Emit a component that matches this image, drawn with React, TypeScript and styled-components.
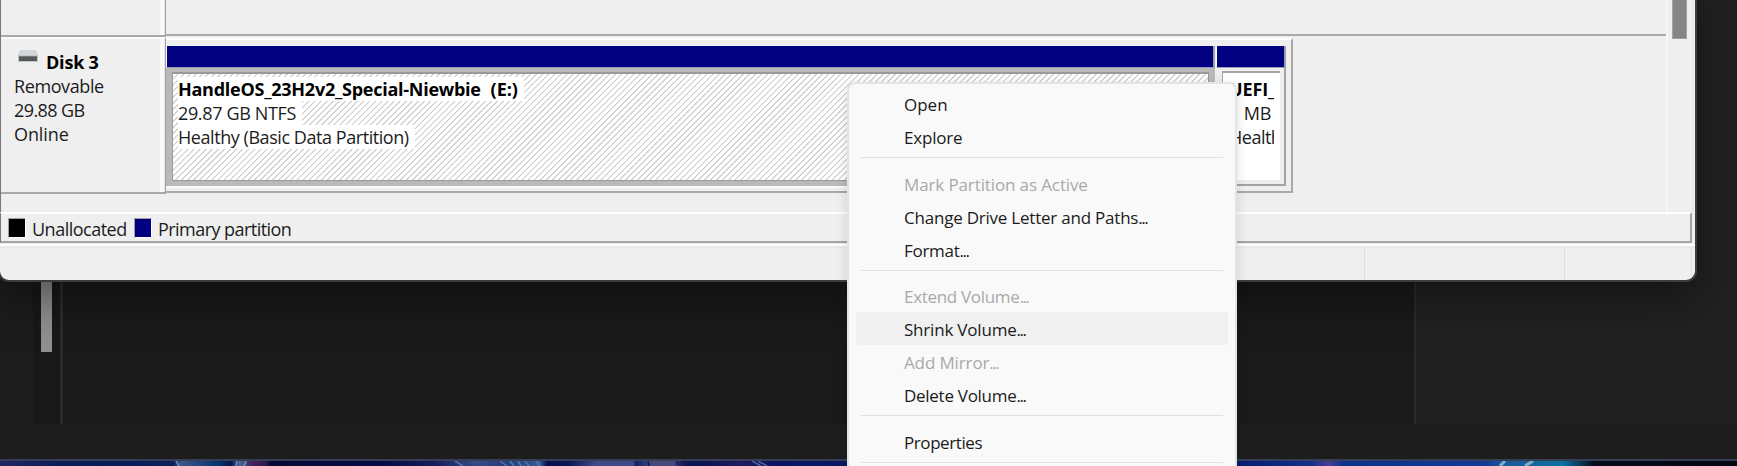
import React from 'react';
import styled, { createGlobalStyle, css } from 'styled-components';

const GlobalStyle = createGlobalStyle`
  * { box-sizing: border-box; }
  html, body { margin: 0; background: #1d1d1d; }
  body { font-family: "Open Sans", "Noto Sans", sans-serif; overflow: hidden; }
`;

const Desktop = styled.div`
  position: relative;
  width: 1737px;
  height: 466px;
  overflow: hidden;
  display: flex;
  flex-direction: column;
  background: #1d1d1d;
`;

/* Dark application behind the disk manager */
const Panes = styled.div`
  display: flex;
  height: 424px;
`;

const SidePane = styled.div`
  width: 33px;
  background: #1c1c1c;
`;

const ScrollPane = styled.div`
  width: 27px;
  padding-left: 8px;
  background: #181818;
`;

const DarkThumb = styled.div`
  width: 11px;
  height: 352px;
  background: #909090;
`;

const PaneDivider = styled.div<{ $width: number }>`
  width: ${(p) => p.$width}px;
  background: #2b2b2b;
`;

const MainPane = styled.div`
  width: 1351px;
  background: #1a1a1a;
`;

const RightPane = styled.div`
  flex: 1;
  background: #212121;
`;

const Footer = styled.div`
  height: 37px;
  background: #1d1d1d;
  border-bottom: 2px solid #353e56;
`;

const Wallpaper = styled.svg`
  display: block;
  width: 1737px;
  height: 5px;
`;

/* Disk manager window */
const Window = styled.section`
  position: absolute;
  left: -2px;
  top: -20px;
  width: 1699px;
  height: 302px;
  display: flex;
  flex-direction: column;
  padding-top: 20px;
  border: 2px solid #3d3d3d;
  border-top: 0;
  border-radius: 0 0 11px 11px;
  overflow: hidden;
  background: #efefef;
  box-shadow: 0 16px 48px rgba(0, 0, 0, 0.42);
`;

const Body = styled.div`
  display: flex;
  height: 212px;
  border-left: 1px solid #777;
`;

const DiskList = styled.div`
  display: flex;
  flex-direction: column;
  width: 1665px;
`;

const ScrollTrack = styled.div`
  width: 27px;
  padding-left: 4px;
  border-left: 2px solid #f6f6f6;
  border-right: 1px solid #e3e3e3;
`;

const LightThumb = styled.div`
  width: 15px;
  height: 39px;
  background: #858585;
  border: 1px solid #a2a2a2;
  border-top: 0;
`;

const DiskRow = styled.div<{ $height: number }>`
  display: flex;
  height: ${(p) => p.$height}px;
`;

const labelFrame = css`
  width: 165px;
  border-right: 1px solid #a0a0a0;
  border-bottom: 2px solid #a8a8a8;
  background: linear-gradient(90deg, #efefef 159px, #f9f9f9 159px, #f9f9f9 163px, #e6e6e6 163px);
`;

const LabelCell = styled.div`
  ${labelFrame}
  border-top: 2px solid #fafafa;
  padding: 11px 0 0 13px;
`;

const EmptyLabel = styled.div`
  ${labelFrame}
`;

const EmptyGraph = styled.div`
  flex: 1;
  height: 36px;
  border-bottom: 2px solid #a9a9a9;
`;

const TextLine = styled.div<{ $bold?: boolean; $track?: number }>`
  height: 24px;
  line-height: 24px;
  font-size: 18px;
  font-weight: ${(p) => (p.$bold ? 700 : 400)};
  letter-spacing: ${(p) => p.$track ?? 0}px;
  color: ${(p) => (p.$bold ? '#000' : '#1c1c1c')};
  white-space: pre;
`;

const LabelTitle = styled.div`
  display: flex;
  gap: 7px;
  padding-left: 3px;
`;

const DiskIcon = styled.svg`
  width: 22px;
  height: 14px;
  flex: none;
`;

const Graph = styled.div`
  width: 1127px;
  height: 155px;
  margin-top: 1px;
  padding: 6px 5px 5px 0;
  display: flex;
  gap: 1px;
  border-top: 2px solid #fff;
  border-right: 2px solid #a8a8a8;
  border-bottom: 2px solid #a8a8a8;
`;

const Partition = styled.div<{ $width: number }>`
  flex: none;
  width: ${(p) => p.$width}px;
  height: 140px;
  display: flex;
  flex-direction: column;
`;

const PartitionBar = styled.div`
  height: 22px;
  background: #000080;
  border-left: 1px solid #fff;
  border-right: 2px solid #9c9ca4;
  border-bottom: 1px solid #9c9cb8;
`;

const SelectedBody = styled.div`
  height: 118px;
  padding: 4px 6px 5px 6px;
  background: #b9b9b9;
  box-shadow: 0 2px 0 #fafafa;
`;

const Hatched = styled.div`
  height: 109px;
  padding: 3px 0 0 5px;
  border: 1px solid #9a9a9a;
  border-top-width: 2px;
  background: repeating-linear-gradient(135deg, #fff 0, #fff 2.7px, #c9c9c9 3.3px, #c9c9c9 3.8px, #fff 4.3px);
`;

const Highlight = styled(TextLine)`
  width: max-content;
  padding-right: 6px;
  background: #fff;
`;

const DriveLetter = styled.span`
  margin-left: 1px;
  letter-spacing: 0;
`;

const PlainBody = styled.div`
  height: 118px;
  padding: 3px 4px 4px 6px;
  border-right: 2px solid #a4a4a4;
  border-bottom: 2px solid #a4a4a4;
`;

const PlainInner = styled.div`
  height: 109px;
  padding: 4px 6px 0 6px;
  background: #fff;
  border-top: 2px solid #a4a4a4;
  border-left: 1px solid #a4a4a4;
`;

const Clip = styled.div`
  overflow: hidden;
`;

const Legend = styled.div`
  display: flex;
  align-items: flex-start;
  height: 31px;
  width: 1692px;
  padding: 4px 0 0 7px;
  border-top: 2px solid #fff;
  border-left: 1px solid #777;
  border-right: 2px solid #a4a4a4;
  border-bottom: 2px solid #a4a4a4;
`;

const Swatch = styled.div<{ $color: string }>`
  width: 18px;
  height: 20px;
  margin-right: 6px;
  background: ${(p) => p.$color};
  border: 1px solid #a0a0a0;
  border-right: 1px solid #fff;
  border-bottom: 1px solid #fff;
`;

const LegendItem = styled.div<{ $width: number }>`
  display: flex;
  width: ${(p) => p.$width}px;
`;

const LegendText = styled(TextLine)`
  line-height: 22px;
`;

const StatusBar = styled.div`
  display: flex;
  height: 36px;
  margin-top: 1px;
  padding-top: 2px;
  border-top: 2px solid #fff;
  box-shadow: inset 0 2px 0 #e9e9e9;
`;

const StatusCell = styled.div<{ $width: number }>`
  width: ${(p) => p.$width}px;
  height: 32px;
  border-right: 1px solid #dedede;
`;

/* Context menu */
const Menu = styled.div`
  position: absolute;
  left: 847px;
  top: 82px;
  width: 390px;
  height: 420px;
  padding: 3px 7px 0;
  border: 2px solid #e4e4e4;
  border-radius: 8px;
  background: #f9f9f9;
  box-shadow: 0 3px 12px rgba(0, 0, 0, 0.13);
`;

const MenuItem = styled.div<{ $disabled?: boolean; $hover?: boolean; $track?: number }>`
  height: 33px;
  padding: 1px 0 0 48px;
  border-radius: 4px;
  line-height: 33px;
  font-size: 17px;
  white-space: pre;
  letter-spacing: ${(p) => p.$track ?? 0}px;
  color: ${(p) => (p.$disabled ? '#a9a9a9' : '#1b1b1b')};
  background: ${(p) => (p.$hover ? '#f0f0f0' : 'transparent')};
`;

const Dots = styled.span`
  letter-spacing: -1.5px;
`;

const Separator = styled.div`
  height: 1px;
  margin: 4.3px 5px 8.3px;
  background: #e0e0e0;
`;

type Entry = { label: string; dots?: boolean; disabled?: boolean; hover?: boolean; track?: number };

const groups: Entry[][] = [
  [{ label: 'Open', track: 0 }, { label: 'Explore', track: -0.2 }],
  [
    { label: 'Mark Partition as Active', disabled: true, track: -0.12 },
    { label: 'Change Drive Letter and Paths', dots: true, track: -0.22 },
    { label: 'Format', dots: true, track: -0.28 },
  ],
  [
    { label: 'Extend Volume', dots: true, disabled: true, track: -0.32 },
    { label: 'Shrink Volume', dots: true, hover: true, track: -0.2 },
    { label: 'Add Mirror', dots: true, disabled: true, track: -0.13 },
    { label: 'Delete Volume', dots: true, track: -0.28 },
  ],
  [{ label: 'Properties', track: -0.42 }],
];

export default function App() {
  return (
    <Desktop>
      <GlobalStyle />
      <Panes>
        <SidePane />
        <ScrollPane>
          <DarkThumb />
        </ScrollPane>
        <PaneDivider $width={3} />
        <MainPane />
        <PaneDivider $width={2} />
        <RightPane />
      </Panes>
      <Footer />
      <Wallpaper viewBox="0 0 1737 5" preserveAspectRatio="none">
        <defs>
          <linearGradient id="sky">
            <stop offset="0" stopColor="#222763" />
            <stop offset=".035" stopColor="#0a1c55" />
            <stop offset=".08" stopColor="#071f59" />
            <stop offset=".1" stopColor="#111f58" />
            <stop offset=".104" stopColor="#3b568a" />
            <stop offset=".125" stopColor="#08366f" />
            <stop offset=".133" stopColor="#07174c" />
            <stop offset=".138" stopColor="#47699b" />
            <stop offset=".144" stopColor="#43285f" />
            <stop offset=".153" stopColor="#2d1a4d" />
            <stop offset=".156" stopColor="#030936" />
            <stop offset=".22" stopColor="#040c42" />
            <stop offset=".25" stopColor="#171d5a" />
            <stop offset=".275" stopColor="#364c86" />
            <stop offset=".29" stopColor="#263b7b" />
            <stop offset=".311" stopColor="#355b94" />
            <stop offset=".315" stopColor="#040d48" />
            <stop offset=".328" stopColor="#0a1a55" />
            <stop offset=".343" stopColor="#3d4a86" />
            <stop offset=".364" stopColor="#414885" />
            <stop offset=".367" stopColor="#142a6c" />
            <stop offset=".376" stopColor="#464979" />
            <stop offset=".388" stopColor="#464979" />
            <stop offset=".393" stopColor="#1d1650" />
            <stop offset=".4" stopColor="#071351" />
            <stop offset=".425" stopColor="#201a5c" />
            <stop offset=".445" stopColor="#0a165f" />
            <stop offset=".6" stopColor="#061c70" />
            <stop offset=".71" stopColor="#061c70" />
            <stop offset=".755" stopColor="#12308b" />
            <stop offset=".765" stopColor="#493d91" />
            <stop offset=".773" stopColor="#0d328b" />
            <stop offset=".855" stopColor="#123a95" />
            <stop offset=".867" stopColor="#1b5a9b" />
            <stop offset=".9" stopColor="#0a719e" />
            <stop offset=".918" stopColor="#030b1b" />
            <stop offset="1" stopColor="#02060f" />
          </linearGradient>
        </defs>
        <rect width="1737" height="5" fill="url(#sky)" />
        <g fill="none" strokeWidth="1.5">
          <path d="M176 0l3 5M237 0l-1 5M246 0l-2 5" stroke="#718fb5" />
          <path d="M455 0l8 5M500 0l7 5M525 0l4 5M536 0l4 5" stroke="#5276a5" />
          <path d="M510 0l4 5M518 0l3 5" stroke="#398ba1" />
          <path d="M636 0v5M648 0l1 5M676 0l3 5" stroke="#0a205f" />
          <path d="M752 0l9 5M758 0l9 5" stroke="#51659b" />
          <path d="M1505 0l-5 5M1533 0l-8 5" stroke="#81afc8" strokeWidth="3" />
        </g>
      </Wallpaper>

      <Window>
        <Body>
          <DiskList>
            <DiskRow $height={37}>
              <EmptyLabel />
              <EmptyGraph />
            </DiskRow>
            <DiskRow $height={157}>
              <LabelCell>
                <LabelTitle>
                  <DiskIcon viewBox="0 0 22 14">
                    <path d="M3 0h16l2 5H1z" fill="#d2d5d9" />
                    <path d="M1 5h20v7H1z" fill="#c3c6ca" />
                    <path d="M2 6h18v5H2z" fill="#555859" />
                    <path d="M2 6h18v1H2z" fill="#77797a" />
                  </DiskIcon>
                  <TextLine $bold $track={-0.2}>Disk 3</TextLine>
                </LabelTitle>
                <TextLine $track={-0.4}>Removable</TextLine>
                <TextLine $track={-0.6}>29.88 GB</TextLine>
                <TextLine $track={-0.1}>Online</TextLine>
              </LabelCell>
              <Graph>
                <Partition $width={1049}>
                  <PartitionBar />
                  <SelectedBody>
                    <Hatched>
                      <Highlight $bold $track={-0.26}>
                        {'HandleOS_23H2v2_Special-Niewbie  '}
                        <DriveLetter>(E:)</DriveLetter>
                      </Highlight>
                      <Highlight $track={-0.36}>29.87 GB NTFS</Highlight>
                      <Highlight $track={-0.44}>Healthy (Basic Data Partition)</Highlight>
                    </Hatched>
                  </SelectedBody>
                </Partition>
                <Partition $width={70}>
                  <PartitionBar />
                  <PlainBody>
                    <PlainInner>
                      <Clip>
                        <TextLine $bold $track={-0.1}>UEFI_</TextLine>
                        <TextLine $track={-0.1}>1 MB</TextLine>
                        <TextLine $track={-0.5}>Healthy</TextLine>
                      </Clip>
                    </PlainInner>
                  </PlainBody>
                </Partition>
              </Graph>
            </DiskRow>
          </DiskList>
          <ScrollTrack>
            <LightThumb />
          </ScrollTrack>
        </Body>
        <Legend>
          <LegendItem $width={126}>
            <Swatch $color="#000" />
            <LegendText $track={-0.5}>Unallocated</LegendText>
          </LegendItem>
          <LegendItem $width={200}>
            <Swatch $color="#000080" />
            <LegendText $track={-0.55}>Primary partition</LegendText>
          </LegendItem>
        </Legend>
        <StatusBar>
          <StatusCell $width={1365} />
          <StatusCell $width={200} />
          <StatusCell $width={127} />
        </StatusBar>
      </Window>

      <Menu>
        {groups.map((group, g) => (
          <React.Fragment key={g}>
            {group.map((e) => (
              <MenuItem key={e.label} $disabled={e.disabled} $hover={e.hover} $track={e.track}>
                {e.label}
                {e.dots && <Dots>...</Dots>}
              </MenuItem>
            ))}
            <Separator />
          </React.Fragment>
        ))}
      </Menu>
    </Desktop>
  );
}
